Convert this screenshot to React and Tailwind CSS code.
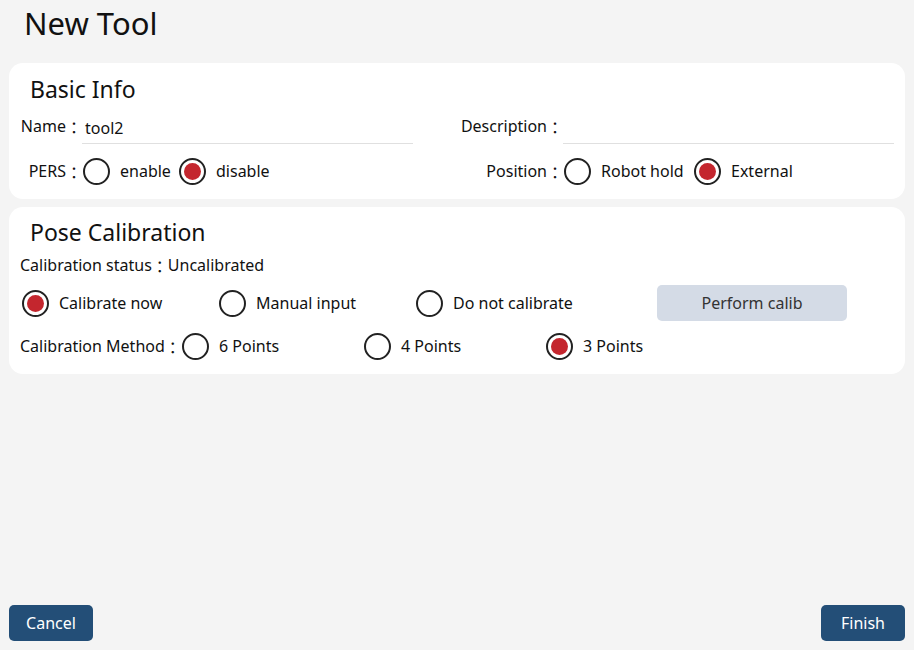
function Radio({ checked }) {
    return (
        <span className="w-[27px] h-[27px] rounded-full border-[2.5px] border-[#222] flex items-center justify-center shrink-0">
            {checked && <span className="w-[17px] h-[17px] rounded-full bg-[#c4262e]"></span>}
        </span>
    );
}

function Option({ label, checked, className = "" }) {
    return (
        <div className={`flex items-center gap-[10px] ${className}`}>
            <Radio checked={checked} />
            <span>{label}</span>
        </div>
    );
}

// full-width colon, dropped onto the baseline like the original UI font
function Colon() {
    return <span className="inline-block translate-y-[2px]">：</span>;
}

export default function App() {
    return (
        <div
            className="w-[914px] h-[650px] bg-[#f4f4f4] text-[#111] flex flex-col text-[16px]"
            style={{ fontFamily: '"Noto Sans", "Noto Sans CJK JP", sans-serif' }}
        >
            {/* Title */}
            <h1 className="text-[31px] leading-none pl-[24px] pt-[8px] h-[63px]">New Tool</h1>

            {/* Basic Info */}
            <div className="mx-[9px] bg-white rounded-[14px] h-[136px] px-[11px] pt-[12px]">
                <h2 className="text-[23px] leading-[28px] pl-[10px]">Basic Info</h2>
                <div className="flex mt-[7px]">
                    <div className="flex flex-col w-[393px]">
                        <div className="flex items-end h-[34px]">
                            <span className="w-[62px] text-right pb-[6px] whitespace-nowrap">Name<Colon /></span>
                            <div className="w-[331px] border-b border-[#e0e0e0] h-full flex items-center pl-[3px] pt-[2px]">tool2</div>
                        </div>
                        <div className="flex items-center h-[54px]">
                            <span className="w-[62px] text-right whitespace-nowrap">PERS<Colon /></span>
                            <Option label="enable" className="w-[96px] ml-[1px]" />
                            <Option label="disable" checked />
                        </div>
                    </div>
                    <div className="flex flex-col ml-[47px]">
                        <div className="flex items-end h-[34px]">
                            <span className="w-[103px] text-right pb-[6px] whitespace-nowrap">Description<Colon /></span>
                            <div className="w-[331px] border-b border-[#e0e0e0] h-full"></div>
                        </div>
                        <div className="flex items-center h-[54px]">
                            <span className="w-[103px] text-right whitespace-nowrap">Position<Colon /></span>
                            <Option label="Robot hold" className="w-[130px] ml-[1px]" />
                            <Option label="External" checked />
                        </div>
                    </div>
                </div>
            </div>

            {/* Pose Calibration */}
            <div className="mx-[9px] mt-[8px] bg-white rounded-[14px] h-[167px] px-[11px] pt-[11px]">
                <h2 className="text-[23px] leading-[28px] pl-[10px]">Pose Calibration</h2>
                <div className="mt-[8px] leading-[22px]">Calibration status<Colon />Uncalibrated</div>
                <div className="flex items-center mt-[9px] h-[36px] pl-[2px]">
                    <Option label="Calibrate now" checked className="w-[197px]" />
                    <Option label="Manual input" className="w-[197px]" />
                    <Option label="Do not calibrate" className="w-[241px]" />
                    <button className="w-[190px] h-[36px] bg-[#d4dbe6] rounded-[5px] text-[#333]">Perform calib</button>
                </div>
                <div className="flex items-center mt-[7px] h-[36px]">
                    <span className="w-[162px] whitespace-nowrap">Calibration Method<Colon /></span>
                    <Option label="6 Points" className="w-[182px]" />
                    <Option label="4 Points" className="w-[182px]" />
                    <Option label="3 Points" checked />
                </div>
            </div>

            {/* Footer */}
            <div className="mt-auto flex justify-between px-[9px] pb-[9px]">
                <button className="w-[84px] h-[36px] bg-[#234e77] text-white rounded-[5px]">Cancel</button>
                <button className="w-[84px] h-[36px] bg-[#234e77] text-white rounded-[5px]">Finish</button>
            </div>
        </div>
    );
}
